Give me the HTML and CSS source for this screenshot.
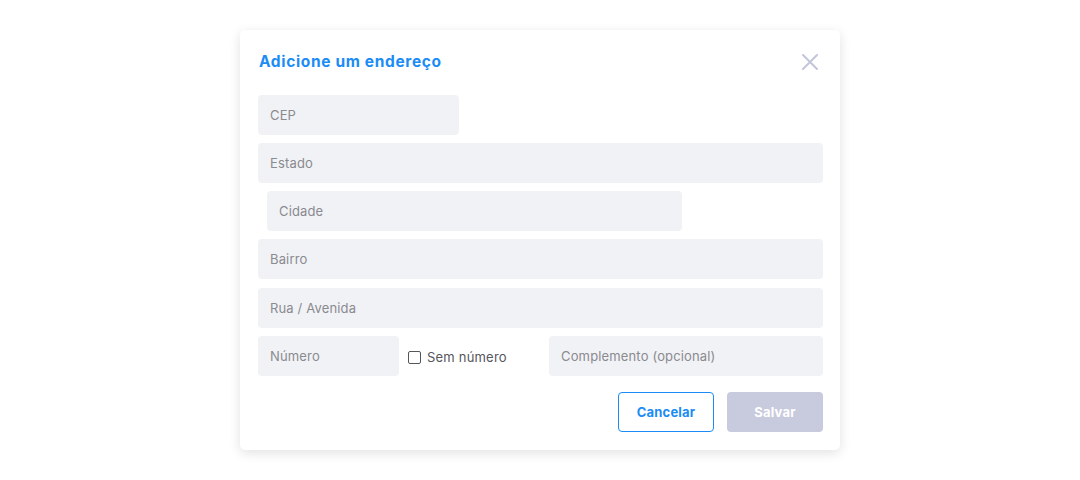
FILE: index.html
```html
<!DOCTYPE html>
<html lang="pt">
<head>
<meta charset="utf-8">
<title>Adicione um endereço</title>
<link rel="stylesheet" href="styles.css">
</head>
<body>
<div class="page">
  <div class="modal">
    <div class="modal-head">
      <h2 class="title">Adicione um endereço</h2>
      <button class="close" aria-label="Fechar">
        <svg width="16" height="16" viewBox="0 0 16 16"><path d="M1 1L15 15M15 1L1 15" stroke="#c3c6da" stroke-width="2" stroke-linecap="round" fill="none"/></svg>
      </button>
    </div>
    <div class="form">
      <div class="field w-cep">CEP</div>
      <div class="field">Estado</div>
      <div class="field w-city">Cidade</div>
      <div class="field">Bairro</div>
      <div class="field">Rua / Avenida</div>
      <div class="row">
        <div class="field w-num">Número</div>
        <label class="check"><span class="box"></span>Sem número</label>
        <div class="field w-comp">Complemento (opcional)</div>
      </div>
    </div>
    <div class="actions">
      <button class="btn btn-outline">Cancelar</button>
      <button class="btn btn-disabled">Salvar</button>
    </div>
  </div>
</div>
</body>
</html>
```
FILE: styles.css
```css
* { box-sizing: border-box; }
html, body { margin: 0; padding: 0; background: #ffffff; }
body { font-family: Inter, "Noto Sans", sans-serif; width: 1080px; height: 480px; overflow: hidden; }
.page { display: flex; justify-content: center; padding-top: 30px; }
.modal {
  width: 600px;
  height: 420px;
  background: #fff;
  border-radius: 5px;
  box-shadow: 0 3px 12px rgba(0,0,0,0.12);
  padding: 0 17px 0 18px;
}
.modal-head { display: flex; justify-content: space-between; align-items: center; height: 63px; margin-bottom: 2px; }
.title { margin: 0 0 0 1px; font-size: 15.5px; font-weight: 700; color: #1b8cf5; letter-spacing: 0.65px; }
.close { background: none; border: 0; padding: 0; margin-right: 5px; width: 16px; height: 16px; display: flex; }
.form { display: flex; flex-direction: column; gap: 8px; }
.field {
  height: 40px;
  background: #f1f2f6;
  border-radius: 4px;
  display: flex;
  align-items: center;
  padding-left: 12px;
  font-size: 13px;
  color: #8a8a8f;
  letter-spacing: 0.15px;
}
.field:nth-child(5) { margin-top: 1px; }
.w-cep { width: 201px; }
.w-city { width: 415px; margin-left: 9px; }
.row { display: flex; align-items: center; }
.w-num { width: 141px; }
.check { display: flex; align-items: center; margin-left: 9px; font-size: 13px; color: #55565c; width: 141px; position: relative; top: 1px; letter-spacing: 0.2px; }
.box { width: 13px; height: 13px; border: 1.5px solid #55565c; border-radius: 2px; margin-right: 6px; }
.w-comp { flex: 1; }
.actions { display: flex; justify-content: flex-end; gap: 13px; margin-top: 16px; }
.btn { height: 40px; border-radius: 4px; font-family: inherit; font-size: 13px; font-weight: 700; letter-spacing: 0.2px; }
.btn-outline { width: 96px; background: #fff; border: 1px solid #1b8cf5; color: #1b8cf5; }
.btn-disabled { width: 96px; background: #c8cadd; border: 0; color: #fff; }
```
